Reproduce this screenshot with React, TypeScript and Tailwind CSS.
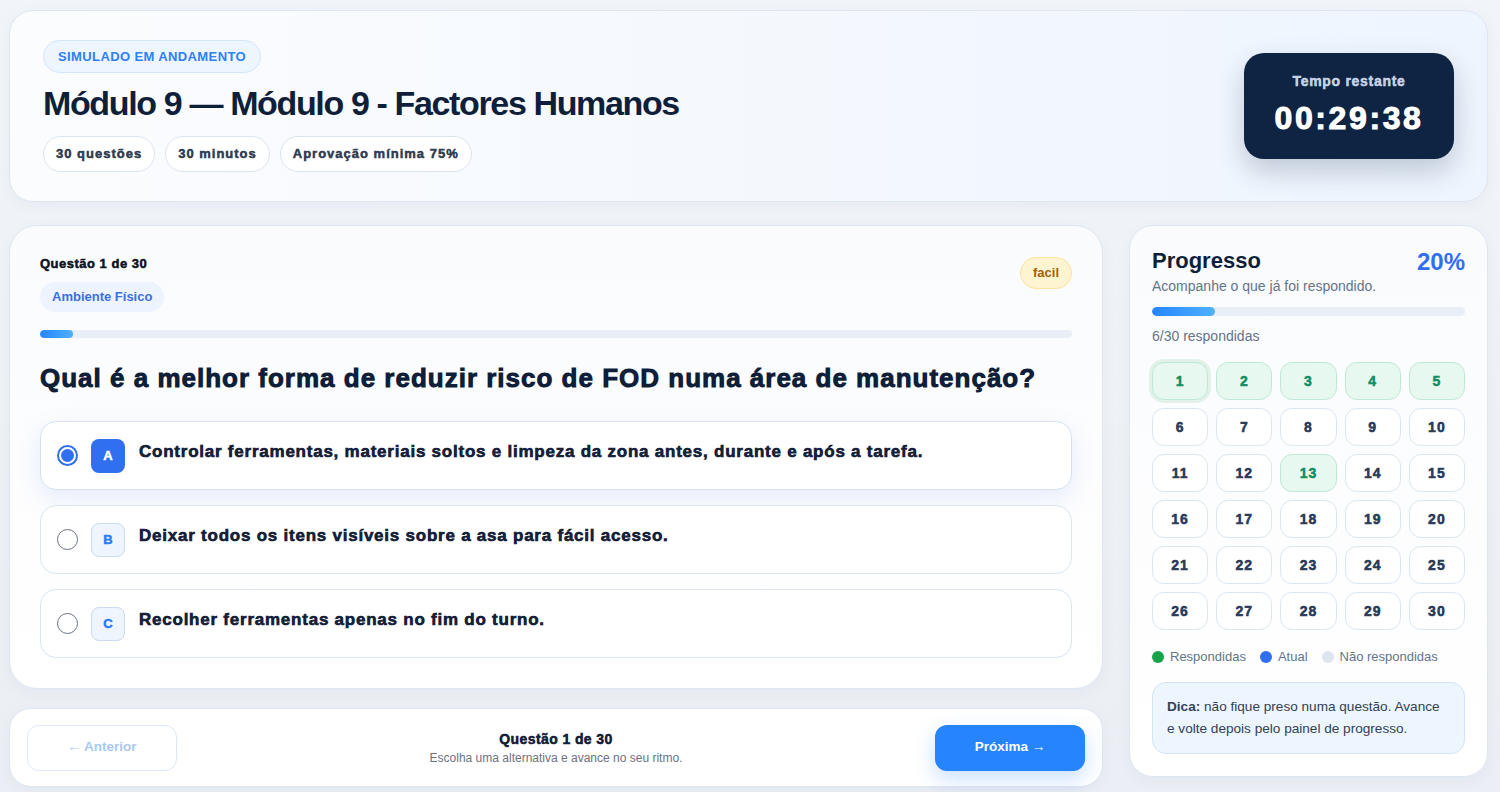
import React from "react";

const answered = new Set([1, 2, 3, 4, 5, 13]);

function Option({ letter, text, selected }: { letter: string; text: string; selected?: boolean }) {
  return (
    <div
      className={
        "flex items-center h-[69px] rounded-[16px] border bg-white px-[16px] " +
        (selected
          ? "border-[#d6e2f3] shadow-[0_8px_24px_rgba(47,111,240,0.12)]"
          : "border-[#dbe5f1]")
      }
    >
      {selected ? (
        <div className="w-[21px] h-[21px] rounded-full border-2 border-[#2f6ff0] flex items-center justify-center shrink-0">
          <div className="w-[13px] h-[13px] rounded-full bg-[#2f6ff0]" />
        </div>
      ) : (
        <div className="w-[21px] h-[21px] rounded-full border-[1.5px] border-[#6b7280] shrink-0" />
      )}
      <div
        className={
          "ml-[13px] w-[34px] h-[34px] rounded-[8px] flex items-center justify-center text-[13px] font-[1000] shrink-0 " +
          (selected
            ? "bg-[#2f6ff0] text-white"
            : "bg-[#eef5ff] border border-[#cdd9ec] text-[#2f7ff7]")
        }
      >
        {letter}
      </div>
      <div className="ml-[14px] text-[17px] font-[1000] tracking-[0.045em] text-[#16213a] -mt-[7px]">{text}</div>
    </div>
  );
}

export default function App() {
  return (
    <div
      className="min-h-[792px] bg-gradient-to-b from-[#f1f4f9] to-[#ebeff5] pl-[9px] pr-[12px] pt-[10px] pb-[5px] text-[#0f1f3a]"
      style={{ fontFamily: '"Liberation Sans", Arial, sans-serif' }}
    >
      {/* Header */}
      <div className="flex items-center justify-between h-[192px] rounded-[24px] border border-[#dde6f2] bg-gradient-to-r from-[#fbfcfe] to-[#eef5fe] pl-[33px] pr-[33px] shadow-[0_4px_16px_rgba(15,31,58,0.04)]">
        <div className="flex flex-col">
          <div className="self-start h-[33px] px-[14px] rounded-full bg-[#edf5ff] border border-[#d4e4fb] flex items-center text-[13px] font-bold tracking-[0.03em] text-[#2f7ff7]">
            SIMULADO EM ANDAMENTO
          </div>
          <h1 className="mt-[10px] text-[34px] leading-[40px] font-bold tracking-[-0.04em] text-[#0f1f3a]">
            Módulo 9 — Módulo 9 - Factores Humanos
          </h1>
          <div className="mt-[13px] flex gap-[10px]">
            {["30 questões", "30 minutos", "Aprovação mínima 75%"].map((t) => (
              <div
                key={t}
                className="h-[36px] px-[12px] rounded-full border border-[#dbe5f1] bg-white flex items-center text-[13px] font-[1000] tracking-[1px] text-[#334155]"
              >
                {t}
              </div>
            ))}
          </div>
        </div>
        <div className="w-[210px] h-[106px] rounded-[20px] bg-[#0f2343] flex flex-col items-center justify-center shadow-[0_12px_28px_rgba(15,35,67,0.22)]">
          <div className="-mt-[6px] text-[14px] font-[1000] tracking-[0.7px] text-[#c3cfe4]">Tempo restante</div>
          <div className="mt-[8px] text-[32px] leading-[36px] font-[1000] tracking-[2.6px] text-white">00:29:38</div>
        </div>
      </div>

      <div className="mt-[23px] flex gap-[26px] items-start">
        {/* Left column */}
        <div className="w-[1094px] flex flex-col gap-[19px]">
          <div className="rounded-[28px] border border-[#dde6f2] bg-gradient-to-b from-[#fafbfd] to-white px-[30px] pt-[30px] pb-[30px] shadow-[0_4px_16px_rgba(15,31,58,0.04)]">
            <div className="flex justify-between items-start">
              <div>
                <div className="text-[13px] font-[1000] tracking-[0.5px] text-[#111827] leading-[16px]">Questão 1 de 30</div>
                <div className="mt-[10px] inline-flex h-[30px] px-[12px] rounded-full bg-[#eef4ff] items-center text-[13px] font-bold text-[#3b6fe0]">
                  Ambiente Físico
                </div>
              </div>
              <div className="mt-[1px] h-[32px] px-[12px] rounded-full bg-[#fff4d1] border border-[#fbe3a0] flex items-center text-[13px] font-bold text-[#a16207]">
                facil
              </div>
            </div>
            <div className="mt-[18px] h-[8px] rounded-full bg-[#e9eef7] overflow-hidden">
              <div className="h-full w-[33px] rounded-full bg-gradient-to-r from-[#2684ff] to-[#4fb0ff]" />
            </div>
            <div className="mt-[24px] text-[26px] leading-[32px] font-[1000] tracking-[1px] text-[#0f1f3a]">
              Qual é a melhor forma de reduzir risco de FOD numa área de manutenção?
            </div>
            <div className="mt-[27px] flex flex-col gap-[15px]">
              <Option letter="A" selected text="Controlar ferramentas, materiais soltos e limpeza da zona antes, durante e após a tarefa." />
              <Option letter="B" text="Deixar todos os itens visíveis sobre a asa para fácil acesso." />
              <Option letter="C" text="Recolher ferramentas apenas no fim do turno." />
            </div>
          </div>

          {/* Nav */}
          <div className="h-[79px] rounded-[22px] border border-[#dde6f2] bg-white px-[17px] flex items-center justify-between shadow-[0_4px_16px_rgba(15,31,58,0.04)]">
            <div className="w-[150px] h-[46px] rounded-[12px] border border-[#dbe8f8] bg-white flex items-center justify-center text-[13.5px] font-bold text-[#a9c9f6]">
              ← Anterior
            </div>
            <div className="flex flex-col items-center">
              <div className="text-[14px] font-[1000] tracking-[0.4px] text-[#16213a] leading-[18px]">Questão 1 de 30</div>
              <div className="text-[12px] text-[#6b7280] leading-[16px] mt-[2px]">Escolha uma alternativa e avance no seu ritmo.</div>
            </div>
            <div className="w-[150px] h-[46px] rounded-[12px] bg-[#2684ff] flex items-center justify-center text-[13.5px] font-bold text-white shadow-[0_8px_20px_rgba(38,132,255,0.25)]">
              Próxima →
            </div>
          </div>
        </div>

        {/* Side */}
        <div className="w-[359px] rounded-[24px] border border-[#dde6f2] bg-gradient-to-b from-[#fafbfd] to-white px-[22px] pt-[22px] pb-[22px] shadow-[0_4px_16px_rgba(15,31,58,0.04)]">
          <div className="flex justify-between items-start">
            <div className="text-[22px] leading-[26px] font-bold text-[#0f1f3a]">Progresso</div>
            <div className="text-[24px] leading-[28px] font-bold text-[#2f6ff0]">20%</div>
          </div>
          <div className="text-[14px] text-[#64748b] leading-[20px]">Acompanhe o que já foi respondido.</div>
          <div className="mt-[11px] h-[9px] rounded-full bg-[#e9eef7] overflow-hidden">
            <div className="h-full w-[63px] rounded-full bg-gradient-to-r from-[#2684ff] to-[#4fb0ff]" />
          </div>
          <div className="mt-[10px] text-[14px] text-[#64748b] leading-[20px]">6/30 respondidas</div>
          <div className="mt-[16px] grid grid-cols-5 gap-x-[8px] gap-y-[8px]">
            {Array.from({ length: 30 }, (_, i) => i + 1).map((n) => {
              const a = answered.has(n);
              return (
                <div
                  key={n}
                  className={
                    "h-[38px] rounded-[12px] border flex items-center justify-center text-[14px] font-[1000] tracking-[1px] " +
                    (a
                      ? "bg-[#e7f8f0] border-[#bfe9d4] text-[#159068]"
                      : "bg-white border-[#dbe5f1] text-[#2c3e5c]") +
                    (n === 1 ? " ring-[3px] ring-[#e2f2e8]" : "")
                  }
                >
                  {n}
                </div>
              );
            })}
          </div>
          <div className="mt-[17px] flex items-center gap-[14px] text-[13px] text-[#64748b]">
            <div className="flex items-center gap-[6px]">
              <span className="w-[12px] h-[12px] rounded-full bg-[#16a34a] inline-block" />
              Respondidas
            </div>
            <div className="flex items-center gap-[6px]">
              <span className="w-[12px] h-[12px] rounded-full bg-[#2f6ff0] inline-block" />
              Atual
            </div>
            <div className="flex items-center gap-[6px]">
              <span className="w-[12px] h-[12px] rounded-full bg-[#dfe5ef] inline-block" />
              Não respondidas
            </div>
          </div>
          <div className="mt-[15px] rounded-[14px] border border-[#d2e3fb] bg-[#edf5ff] px-[14px] py-[13px] text-[13.6px] leading-[22px] text-[#334155]">
            <b>Dica:</b> não fique preso numa questão. Avance e volte depois pelo painel de progresso.
          </div>
        </div>
      </div>
    </div>
  );
}
